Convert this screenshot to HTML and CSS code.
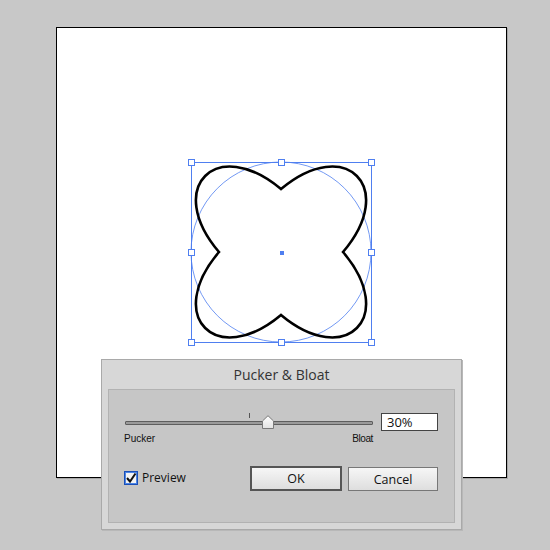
FILE: index.html
```html
<!DOCTYPE html>
<html>
<head>
<meta charset="utf-8">
<link rel="stylesheet" href="styles.css">
</head>
<body>
<div class="artboard">
  <svg class="art" viewBox="57 28 449 449" width="449" height="449">
    <circle cx="281" cy="252" r="90" fill="none" stroke="#4f7ff0" stroke-width="0.8"/>
    <path d="M281,189 C345.6,135 398,187.4 343,252 C398,316.6 345.6,369 281,315 C216.4,369 164,316.6 219,252 C164,187.4 216.4,135 281,189 Z" fill="none" stroke="#000" stroke-width="2.6" stroke-linejoin="miter"/>
    <rect x="191.5" y="162.5" width="180" height="180" fill="none" stroke="#4f7ff0" stroke-width="1"/>
    <g fill="#fff" stroke="#4f7ff0" stroke-width="1">
      <rect x="188.5" y="159.5" width="6" height="6"/>
      <rect x="278.5" y="159.5" width="6" height="6"/>
      <rect x="368.5" y="159.5" width="6" height="6"/>
      <rect x="188.5" y="249.5" width="6" height="6"/>
      <rect x="368.5" y="249.5" width="6" height="6"/>
      <rect x="188.5" y="339.5" width="6" height="6"/>
      <rect x="278.5" y="339.5" width="6" height="6"/>
      <rect x="368.5" y="339.5" width="6" height="6"/>
    </g>
    <rect x="280" y="251" width="4" height="4" fill="#4f7ff0"/>
  </svg>
</div>

<div class="dialog">
  <div class="title">Pucker &amp; Bloat</div>
  <div class="panel">
    <div class="row-slider">
      <div class="slider">
        <div class="track"></div>
        <div class="tick"></div>
        <svg class="thumb" width="12" height="14" viewBox="0 0 12 14">
          <defs>
            <linearGradient id="tg" x1="0" y1="0" x2="0" y2="1">
              <stop offset="0" stop-color="#ffffff"/>
              <stop offset="1" stop-color="#e2e2e2"/>
            </linearGradient>
          </defs>
          <path d="M0.5,6 L6,0.7 L11.5,6 L11.5,13.5 L0.5,13.5 Z" fill="url(#tg)" stroke="#7a7a7a" stroke-width="1"/>
        </svg>
        <div class="labels"><span>Pucker</span><span class="bloat">Bloat</span></div>
      </div>
      <div class="field">30%</div>
    </div>
    <div class="row-bottom">
      <label class="preview">
        <span class="check">
          <svg width="12" height="12" viewBox="0 0 12 12"><path d="M2,6 L5,9.5 L10.5,1.5" fill="none" stroke="#111" stroke-width="2"/></svg>
        </span>
        <span class="preview-text">Preview</span>
      </label>
      <div class="btn btn-ok">OK</div>
      <div class="btn btn-cancel">Cancel</div>
    </div>
  </div>
</div>
</body>
</html>
```

FILE: styles.css
```css
html, body {
  margin: 0;
  padding: 0;
}
body {
  background: #c8c8c8;
  width: 550px;
  height: 550px;
  overflow: hidden;
  position: relative;
  font-family: "Open Sans", "Noto Sans", sans-serif;
}
.artboard {
  margin-left: 56px;
  margin-top: 27px;
  width: 449px;
  height: 449px;
  border: 1px solid #000;
  background: #fff;
  box-shadow: 1px 1px 0 #a8a8a8;
}
.art {
  display: block;
}
.dialog {
  position: absolute;
  left: 101px;
  top: 359px;
  width: 359px;
  height: 169px;
  background: #d7d7d7;
  border: 1px solid #a9a9a9;
  box-shadow: 1px 1px 0 #b8b8b8;
}
.title {
  height: 29px;
  line-height: 30px;
  text-align: center;
  font-size: 14px;
  color: #333;
}
.panel {
  margin: 0 6px;
  background: #c6c6c6;
  border: 1px solid #b2b2b2;
  padding: 23px 0 0 16px;
  box-sizing: border-box;
  height: 134px;
}
.row-slider {
  display: flex;
  align-items: flex-start;
}
.slider {
  position: relative;
  width: 249px;
  height: 30px;
}
.track {
  position: absolute;
  left: 0;
  top: 8px;
  width: 246px;
  height: 2px;
  background: #9a9a9a;
  border: 1px solid #5e5e5e;
  border-radius: 1px;
}
.tick {
  position: absolute;
  left: 124px;
  top: 0;
  width: 1px;
  height: 5px;
  background: #555;
}
.thumb {
  position: absolute;
  left: 137px;
  top: 2px;
  display: block;
}
.labels {
  position: absolute;
  left: -1px;
  width: 249px;
  top: 20px;
  display: flex;
  justify-content: space-between;
  font-family: "Liberation Sans", Arial, sans-serif;
  font-size: 10px;
  color: #111;
}
.bloat {
  letter-spacing: -0.4px;
}
.field {
  margin-left: 7px;
  width: 50px;
  height: 16px;
  background: #fff;
  border: 1px solid #444;
  font-size: 13px;
  line-height: 16px;
  padding-left: 5px;
  color: #111;
}
.row-bottom {
  display: flex;
  align-items: flex-start;
  margin-top: 23px;
}
.preview {
  display: flex;
  align-items: center;
  width: 126px;
  margin-top: 5px;
  margin-left: -1px;
}
.check {
  width: 12px;
  height: 12px;
  border: 1px solid #1a4fb8;
  box-shadow: inset 0 0 0 1px #4d86e6;
  background: #f4f4f4;
  display: flex;
  align-items: center;
  justify-content: center;
}
.check svg {
  display: block;
}
.preview-text {
  margin-left: 4px;
  font-size: 12px;
  color: #111;
  line-height: 14px;
}
.btn {
  box-sizing: border-box;
  display: flex;
  align-items: center;
  justify-content: center;
  font-size: 12.5px;
  color: #111;
  background: linear-gradient(#f6f6f6, #dedede);
}
.btn-ok {
  width: 92px;
  height: 25px;
  border: 2px solid #555;
}
.btn-cancel {
  margin-left: 6px;
  margin-top: 1px;
  width: 90px;
  height: 24px;
  border: 1px solid #777;
}
```
